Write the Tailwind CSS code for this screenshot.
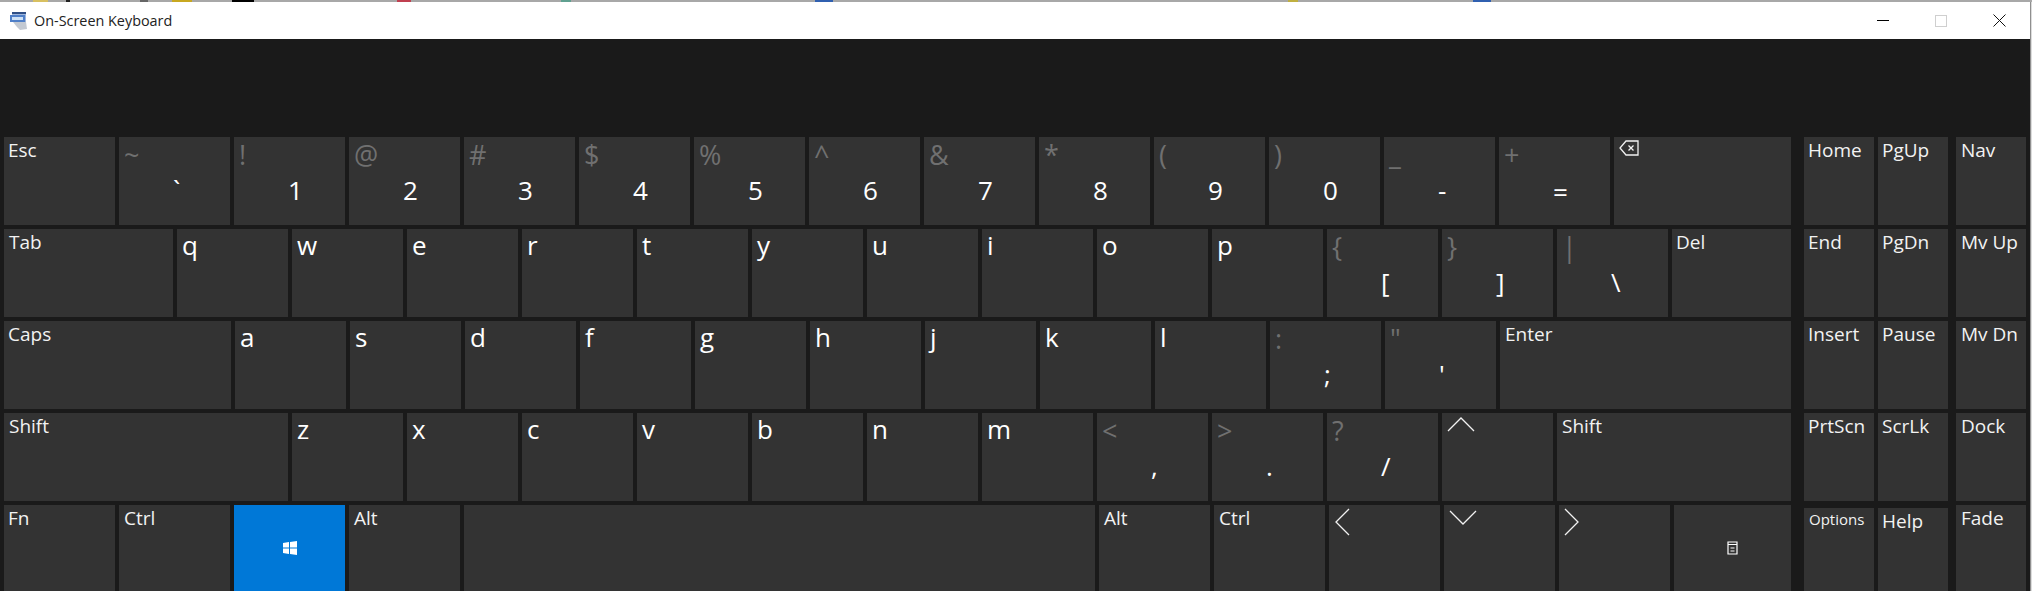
<!DOCTYPE html>
<html lang="en">
<head>
<meta charset="UTF-8">
<title>On-Screen Keyboard</title>
<script src="https://cdn.jsdelivr.net/npm/@tailwindcss/browser@4"></script>
</head>
<body class="h-[591px] w-[2032px] overflow-hidden bg-[#1a1a1a] font-['Open_Sans','Noto_Sans',sans-serif] text-[19px] text-[#f2f2f2]">
<!-- scraps of the desktop behind the window -->
<div class="flex h-[2px] bg-[#a8a8a8]">
  <div class="ml-[33px] w-[15px] bg-[#d8c060]"></div>
  <div class="ml-[18px] w-[4px] bg-[#222]"></div>
  <div class="ml-[70px] w-[8px] bg-[#666]"></div>
  <div class="ml-[24px] w-[20px] bg-[#c8a820]"></div>
  <div class="ml-[40px] w-[22px] bg-black"></div>
  <div class="ml-[143px] w-[14px] bg-[#c04050]"></div>
  <div class="ml-[150px] w-[10px] bg-[#60a090]"></div>
  <div class="ml-[244px] w-[18px] bg-[#3060b0]"></div>
  <div class="ml-[455px] w-[10px] bg-[#c0b040]"></div>
  <div class="ml-[175px] w-[18px] bg-[#3060b0]"></div>
</div>
<div class="flex">
<div class="w-[2030px]">
<!-- title bar -->
<div class="flex h-[37px] items-center bg-white text-black">
  <svg class="ml-[9px] h-[20px] w-[20px]" viewBox="0 0 20 20">
    <path d="M3 1h14v10H3z" fill="#9fb6dc"/>
    <path d="M1 4h15v7H1z" fill="#4f7fc8"/>
    <path d="M3 6h11v3H3z" fill="#cfe2f6"/>
    <path d="M4 11h13l1 7-7 1-3-3z" fill="#c3c9d2"/>
    <path d="M3 1h14v2H3z" fill="#2f4f86"/>
  </svg>
  <span class="ml-[5px] text-[14.400px] text-[#222]">On-Screen Keyboard</span>
  <div class="ml-auto flex items-center pr-[24px]">
    <div class="h-px w-[12px] bg-black"></div>
    <div class="ml-[46px] h-[12px] w-[12px] border border-[#cfcfcf]"></div>
    <svg class="ml-[46px] h-[13px] w-[13px]" viewBox="0 0 13 13" fill="none" stroke="#111" stroke-width="1"><path d="M.5.5l12 12M12.500.5l-12 12"/></svg>
  </div>
</div>
<!-- keyboard -->
<div class="flex pt-[98px] pl-[4px]">
  <div class="flex w-[1787px] flex-col gap-[4px]">
    <!-- row 1 -->
    <div class="flex h-[88px] gap-[4px]">
      <div class="w-[111px] bg-[#333] pl-[4px] leading-[26px]">Esc</div>
      <div class="w-[111px] bg-[#333] pl-[5px]"><div class="h-[36px] text-[27px] leading-[36px] text-[#707070]">~</div><div class="pl-[49px] text-[26px] leading-[34px] text-white">`</div></div>
      <div class="w-[111px] bg-[#333] pl-[5px]"><div class="h-[36px] text-[27px] leading-[36px] text-[#707070]">!</div><div class="pl-[49px] text-[26px] leading-[34px] text-white">1</div></div>
      <div class="w-[111px] bg-[#333] pl-[5px]"><div class="h-[36px] text-[27px] leading-[36px] text-[#707070]">@</div><div class="pl-[49px] text-[26px] leading-[34px] text-white">2</div></div>
      <div class="w-[111px] bg-[#333] pl-[5px]"><div class="h-[36px] text-[27px] leading-[36px] text-[#707070]">#</div><div class="pl-[49px] text-[26px] leading-[34px] text-white">3</div></div>
      <div class="w-[111px] bg-[#333] pl-[5px]"><div class="h-[36px] text-[27px] leading-[36px] text-[#707070]">$</div><div class="pl-[49px] text-[26px] leading-[34px] text-white">4</div></div>
      <div class="w-[111px] bg-[#333] pl-[5px]"><div class="h-[36px] text-[27px] leading-[36px] text-[#707070]">%</div><div class="pl-[49px] text-[26px] leading-[34px] text-white">5</div></div>
      <div class="w-[111px] bg-[#333] pl-[5px]"><div class="h-[36px] text-[27px] leading-[36px] text-[#707070]">^</div><div class="pl-[49px] text-[26px] leading-[34px] text-white">6</div></div>
      <div class="w-[111px] bg-[#333] pl-[5px]"><div class="h-[36px] text-[27px] leading-[36px] text-[#707070]">&amp;</div><div class="pl-[49px] text-[26px] leading-[34px] text-white">7</div></div>
      <div class="w-[111px] bg-[#333] pl-[5px]"><div class="h-[36px] text-[27px] leading-[36px] text-[#707070]">*</div><div class="pl-[49px] text-[26px] leading-[34px] text-white">8</div></div>
      <div class="w-[111px] bg-[#333] pl-[5px]"><div class="h-[36px] text-[27px] leading-[36px] text-[#707070]">(</div><div class="pl-[49px] text-[26px] leading-[34px] text-white">9</div></div>
      <div class="w-[111px] bg-[#333] pl-[5px]"><div class="h-[36px] text-[27px] leading-[36px] text-[#707070]">)</div><div class="pl-[49px] text-[26px] leading-[34px] text-white">0</div></div>
      <div class="w-[111px] bg-[#333] pl-[5px]"><div class="h-[36px] text-[27px] leading-[36px] text-[#707070]">_</div><div class="pl-[49px] text-[26px] leading-[34px] text-white">-</div></div>
      <div class="w-[111px] bg-[#333] pl-[5px]"><div class="h-[36px] text-[27px] leading-[36px] text-[#707070]">+</div><div class="pl-[49px] text-[26px] leading-[38px] text-white">=</div></div>
      <div class="flex-1 bg-[#333] pl-[5px] pt-[3px]">
        <svg class="h-[16px] w-[20px]" viewBox="0 0 20 16" fill="none" stroke="#f2f2f2" stroke-width="1.300"><path d="M19 1H7L1 8l6 7h12zM9.500 5.500l5 5M14.500 5.500l-5 5"/></svg>
      </div>
    </div>
    <!-- row 2 -->
    <div class="flex h-[88px] gap-[4px]">
      <div class="w-[169px] bg-[#333] pl-[5px] leading-[26px]">Tab</div>
      <div class="w-[111px] bg-[#333] pl-[5px] text-[26px] leading-[32px] text-white">q</div>
      <div class="w-[111px] bg-[#333] pl-[5px] text-[26px] leading-[32px] text-white">w</div>
      <div class="w-[111px] bg-[#333] pl-[5px] text-[26px] leading-[32px] text-white">e</div>
      <div class="w-[111px] bg-[#333] pl-[5px] text-[26px] leading-[32px] text-white">r</div>
      <div class="w-[111px] bg-[#333] pl-[5px] text-[26px] leading-[32px] text-white">t</div>
      <div class="w-[111px] bg-[#333] pl-[5px] text-[26px] leading-[32px] text-white">y</div>
      <div class="w-[111px] bg-[#333] pl-[5px] text-[26px] leading-[32px] text-white">u</div>
      <div class="w-[111px] bg-[#333] pl-[5px] text-[26px] leading-[32px] text-white">i</div>
      <div class="w-[111px] bg-[#333] pl-[5px] text-[26px] leading-[32px] text-white">o</div>
      <div class="w-[111px] bg-[#333] pl-[5px] text-[26px] leading-[32px] text-white">p</div>
      <div class="w-[111px] bg-[#333] pl-[5px]"><div class="h-[36px] text-[27px] leading-[36px] text-[#707070]">{</div><div class="pl-[49px] text-[26px] leading-[34px] text-white">[</div></div>
      <div class="w-[111px] bg-[#333] pl-[5px]"><div class="h-[36px] text-[27px] leading-[36px] text-[#707070]">}</div><div class="pl-[49px] text-[26px] leading-[34px] text-white">]</div></div>
      <div class="w-[111px] bg-[#333] pl-[5px]"><div class="h-[36px] text-[27px] leading-[36px] text-[#707070]">|</div><div class="pl-[49px] text-[26px] leading-[34px] text-white">\</div></div>
      <div class="flex-1 bg-[#333] pl-[4px] leading-[26px]">Del</div>
    </div>
    <!-- row 3 -->
    <div class="flex h-[88px] gap-[4px]">
      <div class="w-[227px] bg-[#333] pl-[4px] leading-[26px]">Caps</div>
      <div class="w-[111px] bg-[#333] pl-[5px] text-[26px] leading-[32px] text-white">a</div>
      <div class="w-[111px] bg-[#333] pl-[5px] text-[26px] leading-[32px] text-white">s</div>
      <div class="w-[111px] bg-[#333] pl-[5px] text-[26px] leading-[32px] text-white">d</div>
      <div class="w-[111px] bg-[#333] pl-[5px] text-[26px] leading-[32px] text-white">f</div>
      <div class="w-[111px] bg-[#333] pl-[5px] text-[26px] leading-[32px] text-white">g</div>
      <div class="w-[111px] bg-[#333] pl-[5px] text-[26px] leading-[32px] text-white">h</div>
      <div class="w-[111px] bg-[#333] pl-[5px] text-[26px] leading-[32px] text-white">j</div>
      <div class="w-[111px] bg-[#333] pl-[5px] text-[26px] leading-[32px] text-white">k</div>
      <div class="w-[111px] bg-[#333] pl-[5px] text-[26px] leading-[32px] text-white">l</div>
      <div class="w-[111px] bg-[#333] pl-[5px]"><div class="h-[36px] text-[27px] leading-[36px] text-[#707070]">:</div><div class="pl-[49px] text-[26px] leading-[34px] text-white">;</div></div>
      <div class="w-[111px] bg-[#333] pl-[5px]"><div class="h-[36px] text-[27px] leading-[36px] text-[#707070]">"</div><div class="pl-[49px] text-[26px] leading-[34px] text-white">'</div></div>
      <div class="flex-1 bg-[#333] pl-[5px] leading-[26px]">Enter</div>
    </div>
    <!-- row 4 -->
    <div class="flex h-[88px] gap-[4px]">
      <div class="w-[284px] bg-[#333] pl-[5px] leading-[26px]">Shift</div>
      <div class="w-[111px] bg-[#333] pl-[5px] text-[26px] leading-[32px] text-white">z</div>
      <div class="w-[111px] bg-[#333] pl-[5px] text-[26px] leading-[32px] text-white">x</div>
      <div class="w-[111px] bg-[#333] pl-[5px] text-[26px] leading-[32px] text-white">c</div>
      <div class="w-[111px] bg-[#333] pl-[5px] text-[26px] leading-[32px] text-white">v</div>
      <div class="w-[111px] bg-[#333] pl-[5px] text-[26px] leading-[32px] text-white">b</div>
      <div class="w-[111px] bg-[#333] pl-[5px] text-[26px] leading-[32px] text-white">n</div>
      <div class="w-[111px] bg-[#333] pl-[5px] text-[26px] leading-[32px] text-white">m</div>
      <div class="w-[111px] bg-[#333] pl-[5px]"><div class="h-[36px] text-[27px] leading-[36px] text-[#707070]">&lt;</div><div class="pl-[49px] text-[26px] leading-[34px] text-white">,</div></div>
      <div class="w-[111px] bg-[#333] pl-[5px]"><div class="h-[36px] text-[27px] leading-[36px] text-[#707070]">&gt;</div><div class="pl-[49px] text-[26px] leading-[34px] text-white">.</div></div>
      <div class="w-[111px] bg-[#333] pl-[5px]"><div class="h-[36px] text-[27px] leading-[36px] text-[#707070]">?</div><div class="pl-[49px] text-[26px] leading-[34px] text-white">/</div></div>
      <div class="w-[111px] bg-[#333] pl-[5px] pt-[4px]"><svg class="h-[16px] w-[28px]" viewBox="0 0 28 16" fill="none" stroke="#f2f2f2" stroke-width="1.300"><path d="M1 14L14 1l13 13"/></svg></div>
      <div class="flex-1 bg-[#333] pl-[5px] leading-[26px]">Shift</div>
    </div>
    <!-- row 5 -->
    <div class="flex h-[86px] gap-[4px]">
      <div class="w-[111px] bg-[#333] pl-[4px] leading-[26px]">Fn</div>
      <div class="w-[111px] bg-[#333] pl-[5px] leading-[26px]">Ctrl</div>
      <div class="flex w-[111px] items-center justify-center bg-[#0078d7]">
        <svg class="h-[14px] w-[14px]" viewBox="0 0 14 14" fill="#fff"><path d="M0 2l6-1v5.500H0zM7 1l7-1v6.500H7zM0 7.500h6V13l-6-1zM7 7.500h7V14l-7-1z"/></svg>
      </div>
      <div class="w-[111px] bg-[#333] pl-[5px] leading-[26px]">Alt</div>
      <div class="w-[631px] bg-[#333]"></div>
      <div class="w-[111px] bg-[#333] pl-[5px] leading-[26px]">Alt</div>
      <div class="w-[111px] bg-[#333] pl-[5px] leading-[26px]">Ctrl</div>
      <div class="w-[111px] bg-[#333] pl-[5px] pt-[3px]"><svg class="h-[28px] w-[16px]" viewBox="0 0 16 28" fill="none" stroke="#f2f2f2" stroke-width="1.300"><path d="M15 1L2 14l13 13"/></svg></div>
      <div class="w-[111px] bg-[#333] pl-[5px] pt-[4px]"><svg class="h-[16px] w-[28px]" viewBox="0 0 28 16" fill="none" stroke="#f2f2f2" stroke-width="1.300"><path d="M1 2l13 13L27 2"/></svg></div>
      <div class="w-[111px] bg-[#333] pl-[5px] pt-[3px]"><svg class="h-[28px] w-[16px]" viewBox="0 0 16 28" fill="none" stroke="#f2f2f2" stroke-width="1.300"><path d="M1 1l13 13L1 27"/></svg></div>
      <div class="flex flex-1 items-center justify-center bg-[#333]">
        <svg class="h-[14px] w-[11px]" viewBox="0 0 11 14" fill="none" stroke="#fff" stroke-width="1.200"><path d="M1 1h9v12H1zM1 3.500h9M3.500 7h4M3.500 10h4"/></svg>
      </div>
    </div>
  </div>
  <!-- nav block -->
  <div class="ml-[13px] flex flex-col gap-[4px]">
    <div class="flex h-[88px]"><div class="w-[70px] bg-[#333] pl-[4px] leading-[26px]">Home</div><div class="ml-[4px] w-[70px] bg-[#333] pl-[4px] leading-[26px]">PgUp</div><div class="ml-[8px] w-[70px] bg-[#333] pl-[5px] leading-[26px]">Nav</div></div>
    <div class="flex h-[88px]"><div class="w-[70px] bg-[#333] pl-[4px] leading-[26px]">End</div><div class="ml-[4px] w-[70px] bg-[#333] pl-[4px] leading-[26px]">PgDn</div><div class="ml-[8px] w-[70px] bg-[#333] pl-[5px] leading-[26px]">Mv Up</div></div>
    <div class="flex h-[88px]"><div class="w-[70px] bg-[#333] pl-[4px] leading-[26px]">Insert</div><div class="ml-[4px] w-[70px] bg-[#333] pl-[4px] leading-[26px]">Pause</div><div class="ml-[8px] w-[70px] bg-[#333] pl-[5px] leading-[26px]">Mv Dn</div></div>
    <div class="flex h-[88px]"><div class="w-[70px] bg-[#333] pl-[4px] leading-[26px]">PrtScn</div><div class="ml-[4px] w-[70px] bg-[#333] pl-[4px] leading-[26px]">ScrLk</div><div class="ml-[8px] w-[70px] bg-[#333] pl-[5px] leading-[26px]">Dock</div></div>
    <div class="flex h-[86px]"><div class="mt-[3px] w-[70px] bg-[#333] pl-[5px] text-[15px] leading-[22px]">Options</div><div class="ml-[4px] mt-[3px] w-[70px] bg-[#333] pl-[4px] leading-[26px]">Help</div><div class="ml-[8px] w-[70px] bg-[#333] pl-[5px] leading-[26px]">Fade</div></div>
  </div>
</div>
</div>
<!-- window edge -->
<div class="h-[589px] w-[2px] border-l border-[#8f8f8f] bg-[#dcdcdc]"></div>
</div>
</body>
</html>
